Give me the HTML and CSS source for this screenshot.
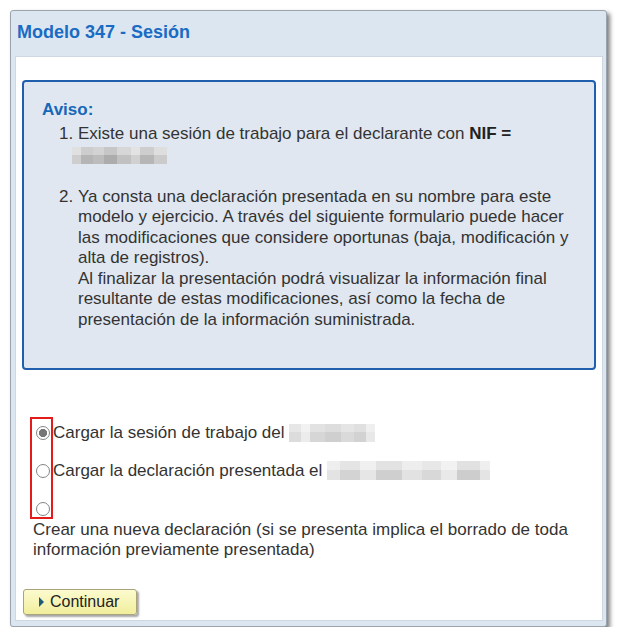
FILE: index.html
```html
<!DOCTYPE html>
<html lang="es">
<head>
<meta charset="utf-8">
<title>Modelo 347 - Sesión</title>
<link rel="stylesheet" href="styles.css">
</head>
<body>
<div class="panel">
  <div class="header"><h1 class="title">Modelo 347 - Sesión</h1></div>
  <div class="content">
    <div class="aviso">
      <div class="aviso-title">Aviso:</div>
      <ol class="aviso-list">
        <li>Existe una sesión de trabajo para el declarante con <b>NIF =</b> <span class="blur blur-nif"></span></li>
        <li>Ya consta una declaración presentada en su nombre para este modelo y ejercicio. A través del siguiente formulario puede hacer las modificaciones que considere oportunas (baja, modificación y alta de registros).<br>Al finalizar la presentación podrá visualizar la información final resultante de estas modificaciones, así como la fecha de presentación de la información suministrada.</li>
      </ol>
    </div>
    <div class="options">
      <div class="red-mark"></div>
      <label class="option"><input class="radio" type="radio" name="op" checked>Cargar la sesión de trabajo del <span class="blur blur-a"></span></label>
      <label class="option"><input class="radio" type="radio" name="op">Cargar la declaración presentada el <span class="blur blur-b"></span></label>
      <label class="option"><input class="radio" type="radio" name="op"><span class="option-block">Crear una nueva declaración (si se presenta implica el borrado de toda información previamente presentada)</span></label>
    </div>
    <div class="actions">
      <button class="btn" type="button"><span class="btn-arrow"></span>Continuar</button>
    </div>
  </div>
</div>
</body>
</html>
```
FILE: styles.css
```css
* { box-sizing: border-box; }
html, body { margin: 0; padding: 0; background: #fff; }
body { font-family: "Liberation Sans", Arial, sans-serif; color: #333; font-size: 17px; }

.panel {
  margin: 10px 0 0 10px;
  width: 597px;
  height: 617px;
  border: 1px solid #9ba4ad;
  border-radius: 3px;
  background: #dce6f0;
  box-shadow: 3px 3px 4px rgba(0,0,0,0.5);
  display: flex;
  flex-direction: column;
}
.header { height: 45px; padding: 11px 0 0 6px; }
.title { margin: 0; font-size: 18px; line-height: 20px; font-weight: bold; color: #1a6bc4; }

.content {
  flex: 1;
  margin: 0 3px 5px 4px;
  background: #fff;
  border: 1px solid #cfd8e2;
  padding: 23px 6px 0 6px;
}

.aviso {
  border: 2px solid #1f5fae;
  border-radius: 4px;
  background: #e0e7f0;
  padding: 18px 9px 38px 18px;
  line-height: 20.5px;
}
.aviso-title { font-weight: bold; color: #1767b9; }
.aviso-list { margin: 3.5px 0 0 0; padding-left: 36px; }
.aviso-list li { margin-bottom: 21.5px; }
.aviso-list li:last-child { margin-bottom: 0; }
.aviso-list b { color: #222; }

.blur { display: inline-block; vertical-align: -4px; }
.blur-nif {
  width: 95px; height: 17px; margin-left: -6px;
  background:
    linear-gradient(to bottom, rgba(255,255,255,0.25) 0 50%, rgba(0,0,0,0.04) 50%),
    linear-gradient(90deg, #d6d6d6 0 10%, #bcbcbc 10% 22%, #c4c4c4 22% 34%, #b3b3b3 34% 47%, #c9c9c9 47% 62%, #d9d9d9 62% 72%, #bdbdbd 72% 86%, #d3d3d3 86% 100%);
}
.blur-a {
  width: 86px; height: 18px;
  background:
    linear-gradient(to bottom, rgba(255,255,255,0.3) 0 45%, transparent 45%),
    linear-gradient(90deg, #dcdcdc 0 14%, #ececec 14% 24%, #d6d6d6 24% 42%, #cfcfcf 42% 60%, #dadada 60% 76%, #d2d2d2 76% 90%, #e8e8e8 90% 100%);
}
.blur-b {
  width: 163px; height: 19px;
  background:
    linear-gradient(to bottom, rgba(255,255,255,0.4) 0 45%, transparent 45%),
    linear-gradient(90deg, #e3e3e3 0 8%, #d3d3d3 8% 20%, #e6e6e6 20% 30%, #cfcfcf 30% 46%, #e2e2e2 46% 58%, #d8d8d8 58% 70%, #e9e9e9 70% 80%, #cdcdcd 80% 94%, #e4e4e4 94% 100%);
}

.options {
  position: relative;
  margin-top: 53px;
  padding-left: 11px;
  line-height: 20px;
}
.option { display: block; margin-bottom: 18px; }
.option:last-of-type { margin-bottom: 0; }
.option-block { display: block; margin-top: 1px; }
.radio {
  -webkit-appearance: none;
  appearance: none;
  display: inline-block;
  width: 14px; height: 14px;
  margin: 0 3px 0 3px;
  padding: 0;
  vertical-align: -2px;
  border: 1px solid #858585;
  border-radius: 50%;
  background: #fff;
}
.radio:checked { background: radial-gradient(circle, #767676 0 3.8px, #fff 4.4px); }

.red-mark {
  position: absolute;
  left: 8px; top: -6px;
  width: 23px; height: 102px;
  border: 2px solid #e41b1b;
}

.actions { margin-top: 29px; padding-left: 1px; }
.btn {
  display: inline-flex; align-items: center;
  width: 114px; height: 26px;
  padding: 0 0 0 15px;
  font-family: "Liberation Sans", Arial, sans-serif;
  font-size: 16px; color: #222;
  background: linear-gradient(#fcfbcf, #f1ee9c);
  border: 1px solid #a9a47c;
  border-radius: 3px;
  box-shadow: 2px 2px 2px rgba(0,0,0,0.35);
}
.btn-arrow {
  width: 0; height: 0;
  border-top: 5px solid transparent;
  border-bottom: 5px solid transparent;
  border-left: 5px solid #1d5b7a;
  margin-right: 6px;
}
```
